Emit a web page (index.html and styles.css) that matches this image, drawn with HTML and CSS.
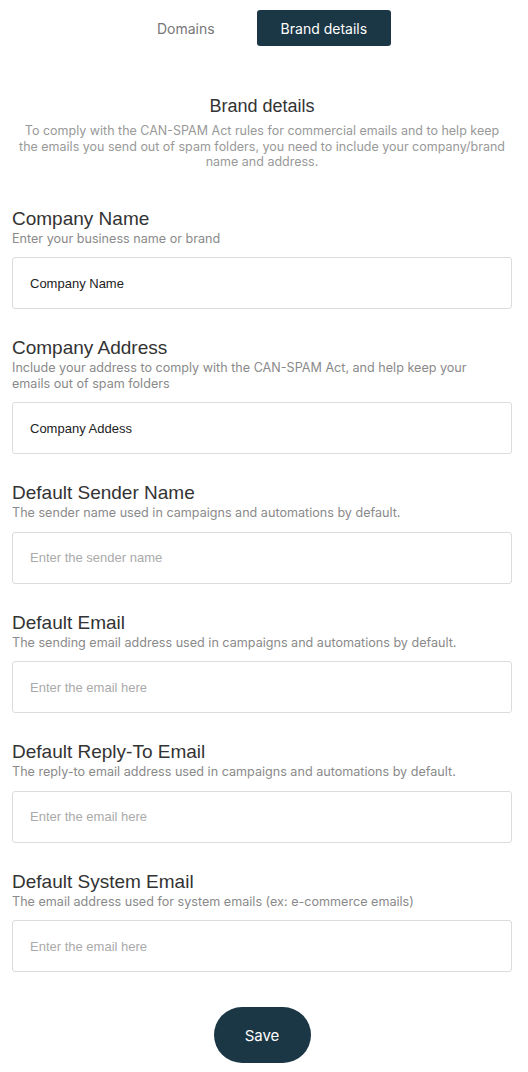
FILE: index.html
```html
<!DOCTYPE html>
<html lang="en">
<head>
    <meta charset="UTF-8">
    <meta name="viewport" content="width=device-width, initial-scale=1.0">
    <title>Brand details</title>
    <link rel="stylesheet" href="styles.css">
</head>
<body>
    <div class="tabs">
        <button class="tab">Domains</button>
        <button class="tab active">Brand details</button>
    </div>

    <div class="intro">
        <h2>Brand details</h2>
        <p>To comply with the CAN-SPAM Act rules for commercial emails and to help keep<br>
        the emails you send out of spam folders, you need to include your company/brand<br>
        name and address.</p>
    </div>

    <form class="brand-form">
        <div class="field">
            <label>Company Name</label>
            <p class="hint">Enter your business name or brand</p>
            <input type="text" value="Company Name">
        </div>
        <div class="field">
            <label>Company Address</label>
            <p class="hint">Include your address to comply with the CAN-SPAM Act, and help keep your emails out of spam folders</p>
            <input type="text" value="Company Addess">
        </div>
        <div class="field">
            <label>Default Sender Name</label>
            <p class="hint">The sender name used in campaigns and automations by default.</p>
            <input type="text" placeholder="Enter the sender name">
        </div>
        <div class="field">
            <label>Default Email</label>
            <p class="hint">The sending email address used in campaigns and automations by default.</p>
            <input type="email" placeholder="Enter the email here">
        </div>
        <div class="field">
            <label>Default Reply-To Email</label>
            <p class="hint">The reply-to email address used in campaigns and automations by default.</p>
            <input type="email" placeholder="Enter the email here">
        </div>
        <div class="field">
            <label>Default System Email</label>
            <p class="hint">The email address used for system emails (ex: e-commerce emails)</p>
            <input type="email" placeholder="Enter the email here">
        </div>
        <div class="actions">
            <button type="button" class="save">Save</button>
        </div>
    </form>
</body>
</html>
```

FILE: styles.css
```css
body {
    font-family: 'Liberation Sans', Arial, sans-serif;
    background: #fff;
    color: #333;
    margin: 0;
    padding: 10px 16px 0 12px;
}
.tabs {
    display: flex;
    justify-content: center;
    gap: 18px;
}
.tab {
    font-family: 'Inter', sans-serif;
    font-size: 14px;
    height: 36px;
    padding: 0 24px;
    border: none;
    border-radius: 3px;
    background: none;
    color: #777;
    cursor: pointer;
}
.tab.active {
    background: #1b3644;
    color: #fff;
}
.intro {
    text-align: center;
    margin-top: 50px;
}
.intro h2 {
    font-size: 18px;
    font-weight: normal;
    line-height: 20px;
    margin: 0 0 7px 0;
    color: #333;
}
.intro p {
    font-family: 'Inter', sans-serif;
    font-size: 12.5px;
    line-height: 15.5px;
    color: #999;
    margin: 0 -4px;
    white-space: nowrap;
}
.brand-form {
    margin-top: 38px;
}
.field {
    margin-bottom: 28px;
}
.field label {
    display: block;
    font-size: 19px;
    line-height: 22px;
    color: #333;
}
.hint {
    font-family: 'Inter', sans-serif;
    font-size: 12.6px;
    line-height: 15.5px;
    color: #8a8a8a;
    margin: 1px 0 0 0;
    max-width: 470px;
}
input {
    display: block;
    box-sizing: border-box;
    width: 100%;
    height: 52px;
    margin-top: 11px;
    padding: 0 17px;
    border: 1px solid #dcdcdc;
    border-radius: 3px;
    font-family: 'Liberation Sans', Arial, sans-serif;
    font-size: 13px;
    color: #222;
    background: #fff;
}
input::placeholder { color: #aaa; }
.actions {
    display: flex;
    justify-content: center;
    margin-top: 35px;
}
.save {
    font-family: 'Inter', sans-serif;
    font-size: 15px;
    width: 97px;
    height: 56px;
    border: none;
    border-radius: 28px;
    background: #1b3644;
    color: #fff;
    cursor: pointer;
}
```
